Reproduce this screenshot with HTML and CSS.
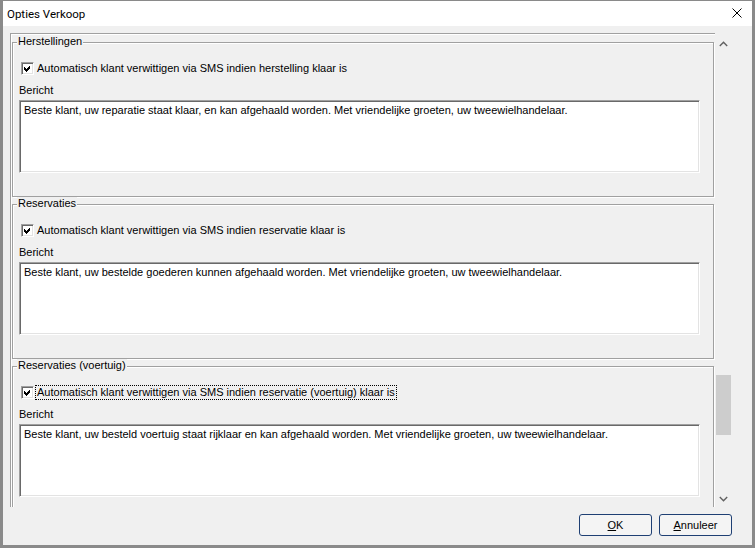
FILE: index.html
```html
<!DOCTYPE html>
<html>
<head>
<meta charset="utf-8">
<link rel="stylesheet" href="styles.css">
</head>
<body>
<div class="window">
  <div class="titlebar">
    <span class="title">Opties Verkoop</span>
    <span class="close"><svg width="10" height="10" viewBox="0 0 10 10"><path d="M0.5 0.5 L9.5 9.5 M9.5 0.5 L0.5 9.5" stroke="#000" stroke-width="1" fill="none"/></svg></span>
  </div>
  <div class="content">
    <div class="scroller">
      <div class="panel">
        <div class="group">
          <span class="legend">Herstellingen</span>
          <div class="check-row">
            <span class="checkbox"><svg width="11" height="11" viewBox="0 0 11 11"><path d="M2 4 L4 6 L8 2 L8 5 L4 9 L2 7 Z" fill="#000" shape-rendering="crispEdges"/></svg></span>
            <span class="check-label">Automatisch klant verwittigen via SMS indien herstelling klaar is</span>
          </div>
          <div class="field-label">Bericht</div>
          <div class="memo">Beste klant, uw reparatie staat klaar, en kan afgehaald worden. Met vriendelijke groeten, uw tweewielhandelaar.</div>
        </div>
        <div class="group">
          <span class="legend">Reservaties</span>
          <div class="check-row">
            <span class="checkbox"><svg width="11" height="11" viewBox="0 0 11 11"><path d="M2 4 L4 6 L8 2 L8 5 L4 9 L2 7 Z" fill="#000" shape-rendering="crispEdges"/></svg></span>
            <span class="check-label">Automatisch klant verwittigen via SMS indien reservatie klaar is</span>
          </div>
          <div class="field-label">Bericht</div>
          <div class="memo">Beste klant, uw bestelde goederen kunnen afgehaald worden. Met vriendelijke groeten, uw tweewielhandelaar.</div>
        </div>
        <div class="group">
          <span class="legend">Reservaties (voertuig)</span>
          <div class="check-row">
            <span class="checkbox"><svg width="11" height="11" viewBox="0 0 11 11"><path d="M2 4 L4 6 L8 2 L8 5 L4 9 L2 7 Z" fill="#000" shape-rendering="crispEdges"/></svg></span>
            <span class="check-label focused">Automatisch klant verwittigen via SMS indien reservatie (voertuig) klaar is</span>
          </div>
          <div class="field-label">Bericht</div>
          <div class="memo">Beste klant, uw besteld voertuig staat rijklaar en kan afgehaald worden. Met vriendelijke groeten, uw tweewielhandelaar.</div>
        </div>
      </div>
      <div class="scrollbar">
        <div class="sb-btn"><svg width="9" height="6" viewBox="0 0 9 6"><polyline points="0.8,5 4.5,1.3 8.2,5" fill="none" stroke="#606060" stroke-width="1.4"/></svg></div>
        <div class="sb-track"><div class="sb-thumb"></div></div>
        <div class="sb-btn"><svg width="9" height="6" viewBox="0 0 9 6"><polyline points="0.8,1 4.5,4.7 8.2,1" fill="none" stroke="#606060" stroke-width="1.4"/></svg></div>
      </div>
    </div>
    <div class="buttons">
      <button class="btn"><u>O</u>K</button>
      <button class="btn"><u>A</u>nnuleer</button>
    </div>
  </div>
</div>
</body>
</html>
```
FILE: styles.css
```css
html, body {
  margin: 0;
  padding: 0;
}
body {
  width: 755px;
  height: 548px;
  overflow: hidden;
  background: #ffffff;
  font-family: "Liberation Sans", Arial, sans-serif;
  font-size: 11px;
  color: #000;
}
.window {
  box-sizing: border-box;
  width: 755px;
  height: 548px;
  border-style: solid;
  border-color: #8a8a8a;
  border-width: 1px 3px 3px 3px;
  background: #f0f0f0;
  display: flex;
  flex-direction: column;
}
.titlebar {
  height: 25px;
  flex: none;
  background: #ffffff;
  display: flex;
  align-items: center;
  justify-content: space-between;
  padding: 0 10px 0 4px;
}
.title {
  font-family: Roboto, "Liberation Sans", sans-serif;
  font-size: 11.5px;
  color: #000;
}
.close {
  display: flex;
  width: 10px;
  height: 10px;
  margin-top: -1px;
}
.content {
  flex: 1;
  display: flex;
  flex-direction: column;
  padding: 7px 20px 0 7px;
}
.scroller {
  display: flex;
  height: 474px;
}
.panel {
  flex: 1;
  border-top: 1px solid #a0a0a0;
  border-left: 1px solid #a0a0a0;
  box-shadow: inset 1px 1px 0 #ffffff;
  overflow: hidden;
  padding: 8px 0 0 1px;
}
.group {
  position: relative;
  box-sizing: border-box;
  width: 702px;
  border: 1px solid #a0a0a0;
  box-shadow: inset 1px 1px 0 #ffffff, 1px 1px 0 #ffffff;
  padding: 19px 0 23px 6px;
  margin-bottom: 7px;
}
.legend {
  position: absolute;
  top: -8px;
  left: 4px;
  height: 13px;
  line-height: 13px;
  padding: 0 1px;
  background: #f0f0f0;
}
.check-row {
  display: flex;
  align-items: center;
  height: 13px;
  margin-left: 2px;
}
.checkbox {
  box-sizing: border-box;
  width: 13px;
  height: 13px;
  background: #fff;
  border: 1px solid;
  border-color: #a0a0a0 #ffffff #ffffff #a0a0a0;
  box-shadow: inset 1px 1px 0 #696969, inset -1px -1px 0 #e3e3e3;
  display: flex;
  flex: none;
}
.checkbox svg {
  display: block;
}
.check-label {
  margin-left: 2px;
  padding: 0 1px;
  line-height: 13px;
  white-space: nowrap;
}
.check-label.focused {
  outline: 1px dotted #000;
}
.field-label {
  margin-top: 9px;
  line-height: 13px;
}
.memo {
  box-sizing: border-box;
  width: 681px;
  height: 73px;
  margin-top: 3px;
  background: #ffffff;
  border: 1px solid;
  border-color: #a0a0a0 #ffffff #ffffff #a0a0a0;
  box-shadow: inset 1px 1px 0 #696969, inset -1px -1px 0 #e3e3e3;
  padding: 3px 4px;
  line-height: 13px;
}
.scrollbar {
  width: 17px;
  flex: none;
  display: flex;
  flex-direction: column;
  margin-top: 2px;
  background: #f0f0f0;
}
.sb-btn {
  height: 17px;
  flex: none;
  display: flex;
  align-items: center;
  justify-content: center;
}
.sb-track {
  flex: 1;
  padding: 0 1px;
}
.sb-thumb {
  margin-top: 323px;
  height: 60px;
  background: #cdcdcd;
}
.buttons {
  display: flex;
  justify-content: flex-end;
  gap: 7px;
  margin-top: 7px;
}
.btn {
  box-sizing: border-box;
  width: 73px;
  height: 22px;
  padding: 0;
  border: 1px solid #1e3f73;
  border-radius: 3px;
  background: #f4f4f4;
  font-family: "Liberation Sans", Arial, sans-serif;
  font-size: 11px;
  color: #000;
}
```
